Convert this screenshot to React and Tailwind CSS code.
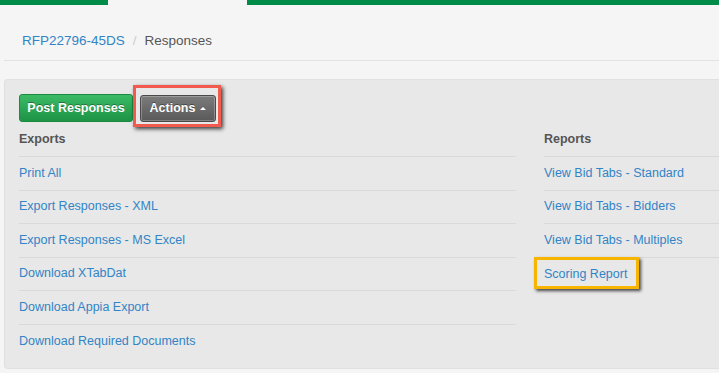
import React from 'react'

const EXPORTS = [
  'Print All',
  'Export Responses - XML',
  'Export Responses - MS Excel',
  'Download XTabDat',
  'Download Appia Export',
  'Download Required Documents',
]

const REPORTS = [
  'View Bid Tabs - Standard',
  'View Bid Tabs - Bidders',
  'View Bid Tabs - Multiples',
  'Scoring Report',
]

function LinkRow({ label, last, highlight }) {
  return (
    <div className={`relative h-[33.5px] flex items-center ${last ? '' : 'border-b border-[#d9d9d9]'}`}>
      <a className="text-[12.5px] text-[#3284c6] cursor-pointer">{label}</a>
      {highlight && (
        <div className="absolute left-[-10px] top-[-1px] w-[105px] h-[32px] border-[3.5px] border-[#f7b500] shadow-[2px_2px_3px_rgba(0,0,0,0.7)]" />
      )}
    </div>
  )
}

export default function App() {
  return (
    <div className="w-[719px] h-[373px] overflow-hidden bg-[#f5f5f5] font-['Liberation_Sans',Arial,sans-serif]">
      {/* top tab strip */}
      <div className="flex h-[5px]">
        <div className="w-[108px] bg-[#008c48]" />
        <div className="w-[139px]" />
        <div className="flex-1 bg-[#008c48]" />
      </div>

      {/* breadcrumb */}
      <div className="ml-[4px] w-[900px] h-[56px] border-b border-[#e3e3e3] pl-[18px] pt-[26px]">
        <div className="flex items-center text-[13.5px] leading-[20px]">
          <a className="text-[#3284c6]">RFP22796-45DS</a>
          <span className="text-[#cccccc] px-[8px]">/</span>
          <span className="text-[#555555]">Responses</span>
        </div>
      </div>

      {/* panel */}
      <div className="mt-[18px] ml-[4px] w-[900px] bg-[#e8e8e8] border-t border-l border-b border-[#e0e0e0] rounded-l-[4px] pt-[14px] pl-[14px] pb-[10px]">
        <div className="flex items-start h-[28px]">
          <button className="w-[114px] h-[28px] rounded-[3px] border border-[#1b8a3f] bg-gradient-to-b from-[#3bbb66] to-[#1c9345] text-white text-[12.5px] font-bold [text-shadow:0_-1px_0_rgba(0,0,0,0.35)]">
            Post Responses
          </button>
          <div className="relative ml-[7px] mt-[1px]">
            <button className="w-[76px] h-[27px] rounded-[3px] border border-[#4a4a4a] bg-gradient-to-b from-[#7c7c7c] to-[#595959] shadow-[inset_0_0_0_1px_rgba(255,255,255,0.25)] text-white text-[12.5px] font-bold flex items-center justify-center gap-[5px] [text-shadow:0_-1px_0_rgba(0,0,0,0.4)]">
              Actions
              <span className="w-0 h-0 border-x-[3px] border-x-transparent border-b-[3px] border-b-white" />
            </button>
            <div className="absolute left-[-7px] top-[-10px] w-[88px] h-[42px] border-[3.5px] border-[#f15a4d] shadow-[2px_2px_4px_rgba(0,0,0,0.75)]" />
          </div>
        </div>

        <div className="flex">
          <div className="w-[497px]">
            <div className="h-[35px] border-b border-[#d9d9d9] flex items-center pt-[1px] text-[12.5px] font-bold text-[#555555]">
              Exports
            </div>
            {EXPORTS.map((e, i) => (
              <LinkRow key={e} label={e} last={i === EXPORTS.length - 1} />
            ))}
          </div>
          <div className="ml-[28px] w-[360px]">
            <div className="h-[35px] border-b border-[#d9d9d9] flex items-center pt-[1px] text-[12.5px] font-bold text-[#555555]">
              Reports
            </div>
            {REPORTS.map((r, i) => (
              <LinkRow key={r} label={r} last={i === REPORTS.length - 1} highlight={r === 'Scoring Report'} />
            ))}
          </div>
        </div>
      </div>
    </div>
  )
}
